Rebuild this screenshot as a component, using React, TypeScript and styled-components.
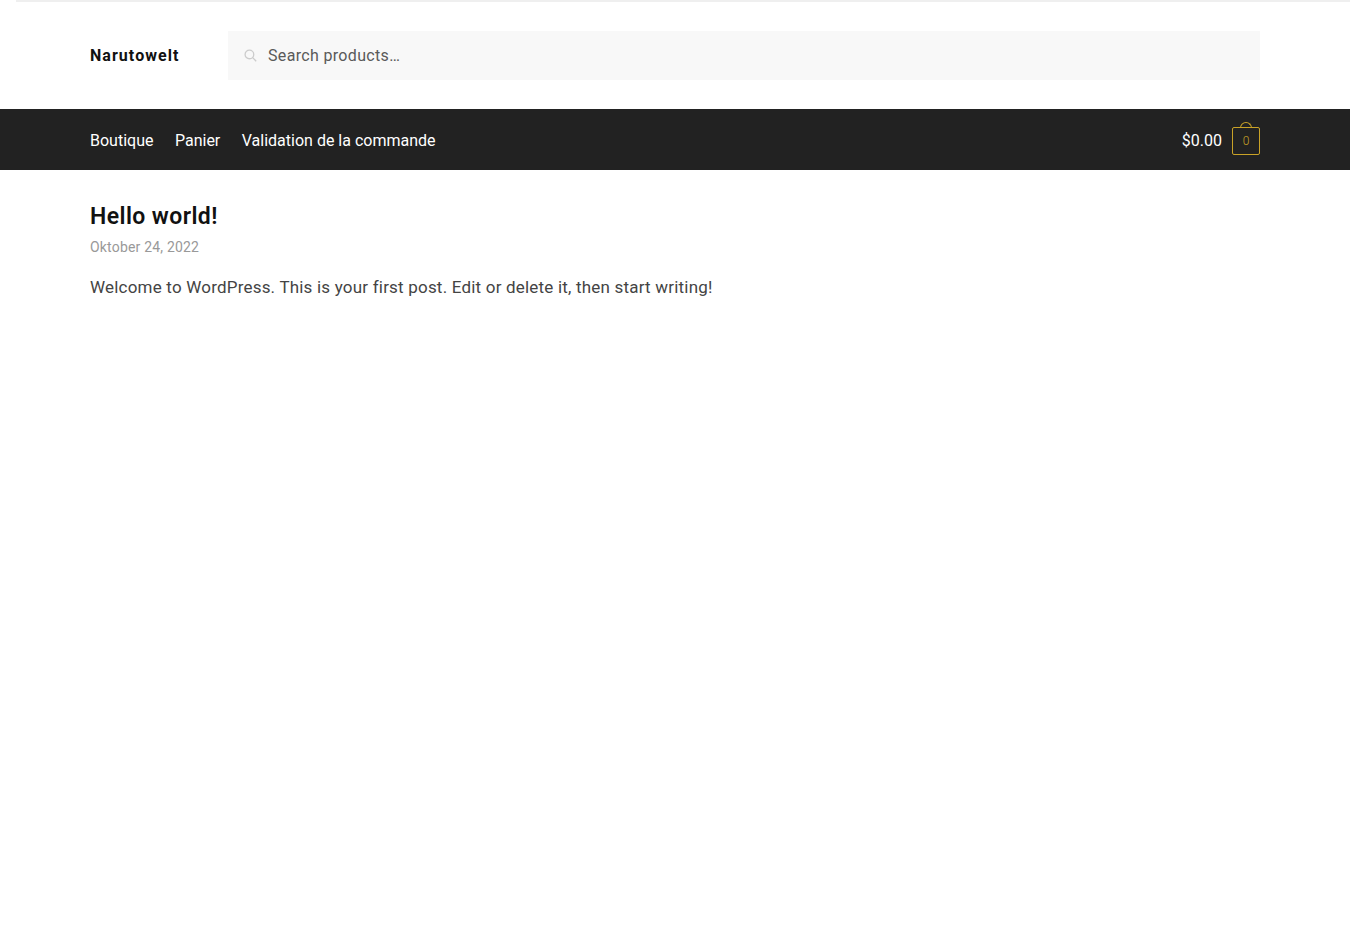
import styled, { createGlobalStyle } from 'styled-components';

const GlobalStyle = createGlobalStyle`
  html, body {
    margin: 0;
    padding: 0;
    background: #ffffff;
    font-family: "Roboto", "Noto Sans", sans-serif;
  }
`;

const Page = styled.div`
  min-height: 940px;
`;

const TopLine = styled.div`
  height: 2px;
  margin-left: 16px;
  background: #efefef;
`;

const Container = styled.div`
  width: 1170px;
  margin: 0 auto;
`;

const HeaderRow = styled(Container)`
  height: 107px;
  display: flex;
  align-items: center;
`;

const SiteTitle = styled.div`
  width: 138px;
  font-size: 16px;
  font-weight: 700;
  letter-spacing: 1.05px;
  color: #111111;
`;

const SearchBox = styled.div`
  flex: 1;
  height: 49px;
  display: flex;
  align-items: center;
  gap: 11px;
  padding-left: 16px;
  background: #f8f8f8;
  color: #5a5a5a;
  font-size: 16px;
  letter-spacing: 0.33px;
`;

const NavBar = styled.div`
  height: 61px;
  background: #222222;
`;

const NavInner = styled(Container)`
  box-sizing: border-box;
  height: 100%;
  padding-top: 2px;
  display: flex;
  align-items: center;
  justify-content: space-between;
`;

const NavLinks = styled.div`
  display: flex;
  gap: 21.5px;
  color: #ffffff;
  font-size: 16px;
`;

const Cart = styled.div`
  display: flex;
  align-items: center;
  gap: 10px;
  color: #ffffff;
  font-size: 16px;
`;

const CartBadge = styled.div`
  position: relative;
  width: 26px;
  height: 26px;
  border: 1px solid #c9a227;
  border-radius: 2px;
  color: #c9a227;
  font-size: 12px;
  font-weight: 300;
  display: flex;
  align-items: center;
  justify-content: center;

  &::before {
    content: '';
    position: absolute;
    top: -6px;
    left: 7px;
    width: 10px;
    height: 5px;
    border: 1px solid #c9a227;
    border-bottom: none;
    border-radius: 6px 6px 0 0;
  }
`;

const Main = styled(Container)`
  padding-top: 33px;
`;

const PostTitle = styled.h1`
  margin: 0;
  font-size: 23px;
  line-height: 28px;
  font-weight: 600;
  letter-spacing: 0.42px;
  color: #111111;
`;

const PostDate = styled.div`
  margin-top: 6px;
  font-size: 14px;
  line-height: 20px;
  letter-spacing: 0.19px;
  color: #999999;
`;

const PostBody = styled.p`
  margin: 18px 0 0;
  font-size: 17px;
  line-height: 24px;
  letter-spacing: 0.2px;
  color: #444444;
`;

export default function App() {
  return (
    <Page>
      <GlobalStyle />
      <TopLine />
      <HeaderRow>
        <SiteTitle>Narutowelt</SiteTitle>
        <SearchBox>
          <svg width="13" height="13" viewBox="0 0 24 24" fill="none" stroke="#cccccc" strokeWidth="2.4">
            <circle cx="10" cy="10" r="8" />
            <path d="M15.5 15.5l7 7" />
          </svg>
          Search products…
        </SearchBox>
      </HeaderRow>
      <NavBar>
        <NavInner>
          <NavLinks>
            <span>Boutique</span>
            <span>Panier</span>
            <span>Validation de la commande</span>
          </NavLinks>
          <Cart>
            $0.00
            <CartBadge>0</CartBadge>
          </Cart>
        </NavInner>
      </NavBar>
      <Main>
        <PostTitle>Hello world!</PostTitle>
        <PostDate>Oktober 24, 2022</PostDate>
        <PostBody>Welcome to WordPress. This is your first post. Edit or delete it, then start writing!</PostBody>
      </Main>
    </Page>
  );
}
